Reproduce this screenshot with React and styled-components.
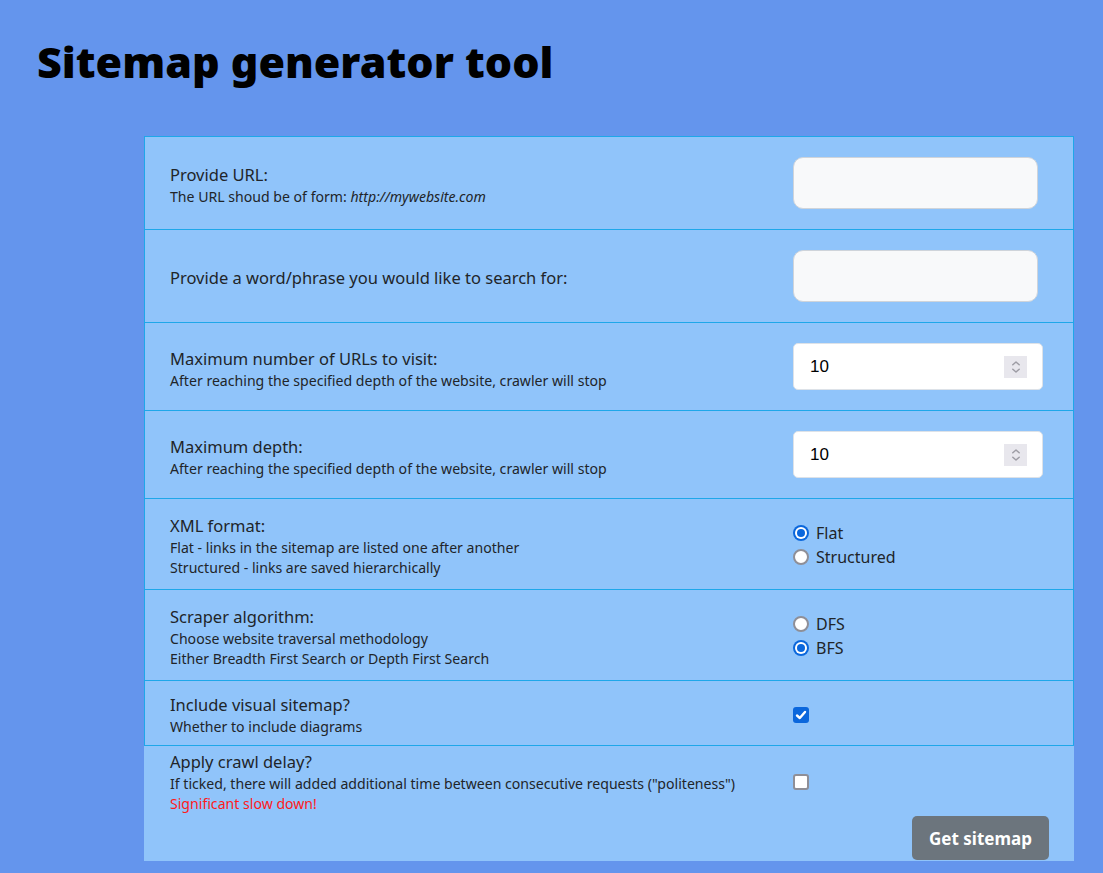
import React from "react";
import styled, { createGlobalStyle } from "styled-components";

const Global = createGlobalStyle`
  html, body { margin: 0; padding: 0; }
  body {
    background: #6495ed;
    font-family: "Noto Sans", "Open Sans", sans-serif;
    color: #212529;
  }
`;

const Page = styled.div`
  padding: 34px 0 12px 0;
`;

const Title = styled.h1`
  margin: 0 0 46px 37px;
  font-family: "Noto Sans", sans-serif;
  font-weight: 900;
  font-size: 43px;
  line-height: 56px;
  color: #000;
`;

const Card = styled.div`
  margin-left: 144px;
  width: 930px;
  background: #90c4fa;
`;

const Row = styled.div`
  display: grid;
  grid-template-columns: 623px 1fr;
  align-items: center;
  padding: 10px 0 10px 25px;
  border: 1px solid #1ea7e9;
  border-bottom: ${(p) => (p.$last ? "1px solid #1ea7e9" : "none")};
`;

const FinalRow = styled.div`
  padding: 4px 25px 1px 26px;
  display: flex;
  flex-direction: column;
`;

const FinalGrid = styled.div`
  display: grid;
  grid-template-columns: 623px 1fr;
  align-items: center;
`;

const TextBlock = styled.div`
  display: flex;
  flex-direction: column;
  ${Row} > & {
    margin: 2px 0 -2px;
  }
`;

const Label = styled.div`
  font-size: 16.5px;
  line-height: 24px;
`;

const Sub = styled.div`
  font-size: 14.1px;
  line-height: 20px;
  color: ${(p) => (p.$warn ? "#ff1a1a" : "#212529")};
  em { font-style: italic; }
`;

const TextInput = styled.input`
  box-sizing: border-box;
  width: 245px;
  height: 52px;
  margin: 10px 0;
  border: 1px solid #cfd4da;
  border-radius: 10px;
  background: #f8f9fa;
  outline: none;
`;

const NumberBox = styled.div`
  box-sizing: border-box;
  width: 250px;
  height: 47px;
  margin: 10px 0;
  border: 1px solid #dde2e8;
  border-radius: 5px;
  background: #fff;
  display: flex;
  align-items: center;
  padding: 0 15px 0 16px;
  justify-content: space-between;
  font-family: "Liberation Sans", Arial, sans-serif;
  font-size: 17px;
  color: #000;
`;

const Spinner = styled.div`
  width: 23px;
  height: 22px;
  background: #e8e7ed;
  display: flex;
  align-items: center;
  justify-content: center;
`;

const RadioGroup = styled.div`
  display: flex;
  flex-direction: column;
  padding: 12px 0 10px;
`;

const RadioItem = styled.label`
  display: flex;
  align-items: center;
  gap: 7px;
  height: 24px;
  font-size: 16px;
`;

const Radio = styled.span`
  box-sizing: border-box;
  width: 16px;
  height: 16px;
  border-radius: 50%;
  background: ${(p) => (p.$on ? "#0b67dc" : "#fff")};
  border: ${(p) => (p.$on ? "none" : "2px solid #8f8f97")};
  display: flex;
  align-items: center;
  justify-content: center;
  &::after {
    content: "";
    display: ${(p) => (p.$on ? "block" : "none")};
    width: 8px;
    height: 8px;
    border-radius: 50%;
    background: #0b67dc;
    box-shadow: 0 0 0 2px #fff;
  }
`;

const Check = styled.span`
  box-sizing: border-box;
  width: 16px;
  height: 16px;
  border-radius: 3px;
  background: ${(p) => (p.$on ? "#0b67dc" : "#fff")};
  border: ${(p) => (p.$on ? "none" : "2px solid #8f8f97")};
  display: flex;
  align-items: center;
  justify-content: center;
  ${Row} > & {
    margin-top: 4px;
  }
`;

const Button = styled.button`
  align-self: flex-end;
  margin-top: 2px;
  width: 137px;
  height: 44px;
  border: none;
  border-radius: 5px;
  background: #6c757d;
  color: #fff;
  font-family: "Noto Sans", sans-serif;
  font-weight: 700;
  font-size: 17px;
`;

const Chevrons = () => (
  <svg width="12" height="16" viewBox="0 0 12 16" fill="none" stroke="#9d9ca4" strokeWidth="1.5" strokeLinecap="round" strokeLinejoin="round">
    <path d="M2.8 5.8 L6 3 L9.2 5.8" />
    <path d="M2.8 10.2 L6 13 L9.2 10.2" />
  </svg>
);

const Tick = () => (
  <svg width="12" height="12" viewBox="0 0 12 12" fill="none" stroke="#fff" strokeWidth="2.4" strokeLinecap="round" strokeLinejoin="round">
    <path d="M2 6.5 L4.8 9 L10 3" />
  </svg>
);

export default function App() {
  return (
    <>
      <Global />
      <Page>
        <Title>Sitemap generator tool</Title>
        <Card>
          <Row>
            <TextBlock>
              <Label>Provide URL:</Label>
              <Sub>
                The URL shoud be of form: <em>http://mywebsite.com</em>
              </Sub>
            </TextBlock>
            <TextInput type="text" />
          </Row>
          <Row>
            <TextBlock>
              <Label>Provide a word/phrase you would like to search for:</Label>
            </TextBlock>
            <TextInput type="text" />
          </Row>
          <Row>
            <TextBlock>
              <Label>Maximum number of URLs to visit:</Label>
              <Sub>After reaching the specified depth of the website, crawler will stop</Sub>
            </TextBlock>
            <NumberBox>
              <span>10</span>
              <Spinner>
                <Chevrons />
              </Spinner>
            </NumberBox>
          </Row>
          <Row>
            <TextBlock>
              <Label>Maximum depth:</Label>
              <Sub>After reaching the specified depth of the website, crawler will stop</Sub>
            </TextBlock>
            <NumberBox>
              <span>10</span>
              <Spinner>
                <Chevrons />
              </Spinner>
            </NumberBox>
          </Row>
          <Row>
            <TextBlock>
              <Label>XML format:</Label>
              <Sub>Flat - links in the sitemap are listed one after another</Sub>
              <Sub>Structured - links are saved hierarchically</Sub>
            </TextBlock>
            <RadioGroup>
              <RadioItem>
                <Radio $on />
                Flat
              </RadioItem>
              <RadioItem>
                <Radio />
                Structured
              </RadioItem>
            </RadioGroup>
          </Row>
          <Row>
            <TextBlock>
              <Label>Scraper algorithm:</Label>
              <Sub>Choose website traversal methodology</Sub>
              <Sub>Either Breadth First Search or Depth First Search</Sub>
            </TextBlock>
            <RadioGroup>
              <RadioItem>
                <Radio />
                DFS
              </RadioItem>
              <RadioItem>
                <Radio $on />
                BFS
              </RadioItem>
            </RadioGroup>
          </Row>
          <Row $last>
            <TextBlock>
              <Label>Include visual sitemap?</Label>
              <Sub>Whether to include diagrams</Sub>
            </TextBlock>
            <Check $on>
              <Tick />
            </Check>
          </Row>
          <FinalRow>
            <FinalGrid>
              <TextBlock>
                <Label>Apply crawl delay?</Label>
                <Sub>If ticked, there will added additional time between consecutive requests ("politeness")</Sub>
                <Sub $warn>Significant slow down!</Sub>
              </TextBlock>
              <Check />
            </FinalGrid>
            <Button>Get sitemap</Button>
          </FinalRow>
        </Card>
      </Page>
    </>
  );
}
